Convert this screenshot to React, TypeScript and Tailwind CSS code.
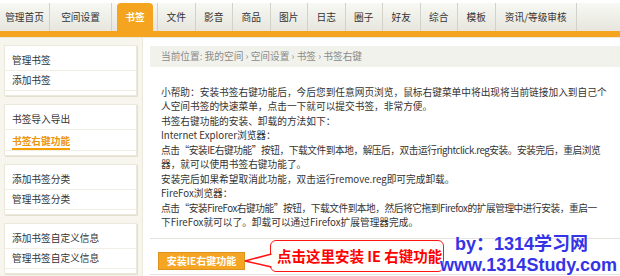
const TABS_LEFT = [
  { t: "管理首页", w: "w-[50px]" },
  { t: "空间设置", w: "w-[62px]" },
];
const TABS_RIGHT = ["文件", "影音", "商品", "图片", "日志", "圈子", "好友", "综合", "模板"];

const MENU = [
  ["管理书签", "添加书签"],
  ["书签导入导出", "书签右键功能"],
  ["添加书签分类", "管理书签分类"],
  ["添加书签自定义信息", "管理书签自定义信息"],
];

// tight: full lines that need a little squeeze to end where the reference wraps
const LINES = [
  { t: "小帮助：安装书签右键功能后，今后您到任意网页浏览，鼠标右键菜单中将出现将当前链接加入到自己个" },
  { t: "人空间书签的快速菜单，点击一下就可以提交书签，非常方便。" },
  { t: "书签右键功能的安装、卸载的方法如下：" },
  { t: "Internet Explorer浏览器：" },
  { t: "点击“安装IE右键功能”按钮，下载文件到本地，解压后，双击运行rightclick.reg安装。安装完后，重启浏览", tight: true },
  { t: "器，就可以使用书签右键功能了。" },
  { t: "安装完后如果希望取消此功能，双击运行remove.reg即可完成卸载。" },
  { t: "FireFox浏览器：" },
  { t: "点击“安装FireFox右键功能”按钮，下载文件到本地，然后将它拖到Firefox的扩展管理中进行安装，重启一", tight: true },
  { t: "下FireFox就可以了。卸载可以通过Firefox扩展管理器完成。" },
];

const ACTIVE = "书签右键功能";

function Tab({ label, w }: { label: string; w: string }) {
  return (
    <div className={`${w} h-full flex items-center justify-center border-r border-[#d2d2c8] whitespace-nowrap`}>
      {label}
    </div>
  );
}

export default function App() {
  return (
    <div className="relative w-[620px] h-[276px] overflow-hidden bg-white text-[#333] font-['Noto_Sans_CJK_SC','Liberation_Sans',sans-serif] text-[9.7px]">
      {/* top tabs */}
      <div className="pt-[3px] bg-white">
        <div className="flex h-[28px] bg-gradient-to-b from-[#f8f8f4] to-[#e6e6de]">
          {TABS_LEFT.map((t) => (
            <Tab key={t.t} label={t.t} w={t.w} />
          ))}
          <div className="w-[5px]" />
          <div className="w-[36px] h-full flex items-center justify-center bg-[#f4a41f] rounded-t-[4px] text-white font-bold">
            书签
          </div>
          <div className="w-[5px] border-r border-[#d2d2c8]" />
          {TABS_RIGHT.map((t) => (
            <Tab key={t} label={t} w="w-[37.5px]" />
          ))}
          <Tab label="资讯/等级审核" w="w-[81.5px]" />
        </div>
        <div className="h-[6px] bg-[#f4a41f]" />
        <div className="h-px bg-[#eee8d6]" />
      </div>

      <div className="flex h-[238px]">
        {/* sidebar */}
        <div className="w-[143px] shrink-0 bg-[#f6f5ee] border-r border-[#ebe8dc] pt-[7px] pl-[4px] flex flex-col gap-[8px]">
          {MENU.map((box, i) => (
            <div
              key={i}
              className="w-[133px] bg-white border border-[#ece8db] shadow-[1px_1px_0_#e4e0d0] pt-[5px] pb-[4px]"
            >
              {box.map((item) =>
                item === ACTIVE ? (
                  <div key={item} className="h-[21px] pl-[7px] pt-[4px] border-b border-[#f1eee3]">
                    <span className="inline-block leading-[12px] pb-[1px] border-b-2 border-[#f5a000] text-[#ec950c] font-bold">
                      {item}
                    </span>
                  </div>
                ) : (
                  <div key={item} className="h-[20px] leading-[19px] pl-[7px] border-b border-[#f1eee3]">
                    {item}
                  </div>
                )
              )}
            </div>
          ))}
        </div>

        {/* content */}
        <div className="flex-1 min-w-0 pl-[7px] pt-[8px]">
          <div className="h-[21px] leading-[21px] bg-[#f2f2ec] pl-[11px] text-[#8a8a8a] whitespace-nowrap">
            当前位置: 我的空间 › 空间设置 › 书签 › 书签右键
          </div>
          <div className="mt-[18px] pl-[11px] leading-[14.45px] whitespace-nowrap">
            {LINES.map((l) => (
              <div key={l.t} className={l.tight ? "tracking-[-0.45px]" : ""}>
                {l.t}
              </div>
            ))}
          </div>
          <div className="mt-[8px] border-t border-[#e4e4de]" />
          <div className="mt-[13px] ml-[8px] w-[87px] h-[18px] flex items-center justify-center bg-[#f5a522] border border-[#dc9420] text-white font-bold text-[10px]">
            安装IE右键功能
          </div>
          <div className="mt-[4px] border-t border-[#e4e4de]" />
        </div>
      </div>

      {/* callout annotation */}
      <div className="absolute left-[270px] top-[240px] w-[174px] h-[32px] rounded-[6px] border-[1.5px] border-[#ff1414] bg-[#fffefa] flex items-center pl-[6px] text-[#f00] font-bold text-[14.5px] font-['Noto_Sans_CJK_SC',sans-serif] whitespace-nowrap">
        点击这里安装 IE 右键功能
      </div>
      <svg className="absolute left-[244px] top-[250px]" width="30" height="22" viewBox="0 0 30 22">
        <polygon points="28.5,4 1,11 28.5,17" fill="#fffefa" />
        <polyline points="27.5,4 1,11 27.5,17" fill="none" stroke="#ff1414" strokeWidth="1.5" strokeLinejoin="miter" />
      </svg>

      {/* watermark */}
      <div className="absolute left-[455px] top-[233px] text-[18px] leading-[22px] font-bold text-[#3434e6] font-['Liberation_Sans','Noto_Sans_CJK_SC',sans-serif] whitespace-nowrap [text-shadow:0_0_2px_#fff,0_0_2px_#fff]">
        by：1314学习网
      </div>
      <div className="absolute left-[440px] top-[254px] text-[18px] leading-[22px] font-bold text-[#3434e6] font-['Liberation_Sans','Noto_Sans_CJK_SC',sans-serif] whitespace-nowrap [text-shadow:0_0_2px_#fff,0_0_2px_#fff]">
        www.1314Study.com
      </div>
    </div>
  );
}
